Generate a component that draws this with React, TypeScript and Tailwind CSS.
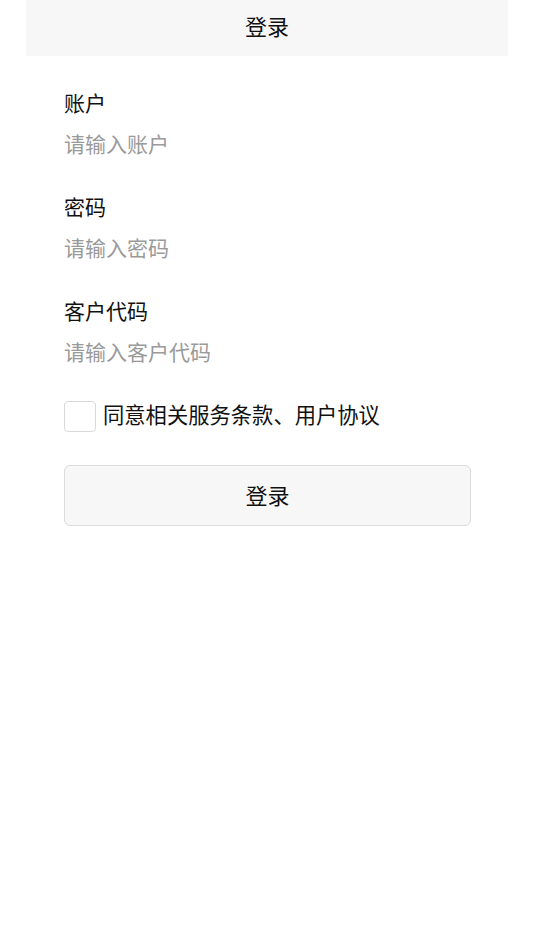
const FIELDS = [
  { label: '账户', placeholder: '请输入账户' },
  { label: '密码', placeholder: '请输入密码' },
  { label: '客户代码', placeholder: '请输入客户代码' },
]

export default function App() {
  return (
    <div
      className="min-h-[950px] w-[534px] bg-white text-[#111]"
      style={{ fontFamily: '"Noto Sans CJK SC", "Noto Sans", sans-serif' }}
    >
      <header className="mx-[26px] flex h-[56px] items-center justify-center bg-[#f7f7f7] pb-[6px] text-[22px]">
        登录
      </header>
      <form className="px-[64px] pt-[26px]">
        <div className="flex flex-col gap-[20px]">
          {FIELDS.map((f) => (
            <div key={f.label}>
              <div className="flex h-[42px] items-center pb-[1px] text-[21px]">{f.label}</div>
              <input
                className="block h-[42px] w-full bg-transparent pb-[4px] text-[21px] outline-none placeholder:text-[#9a9a9a]"
                placeholder={f.placeholder}
              />
            </div>
          ))}
        </div>
        <label className="mt-[27px] flex h-[31px] items-center gap-[7px]">
          <span className="h-[31px] w-[32px] rounded-[4px] border border-[#d8d8d8] bg-white" />
          <span className="h-[31px] pb-[5px] text-[21.3px] leading-[26px]">同意相关服务条款、用户协议</span>
        </label>
        <button
          type="button"
          className="mt-[33px] flex h-[61px] w-[407px] items-center justify-center rounded-[6px] border border-[#dcdcdc] bg-[#f7f7f7] pb-[2px] text-[22px]"
        >
          登录
        </button>
      </form>
    </div>
  )
}
